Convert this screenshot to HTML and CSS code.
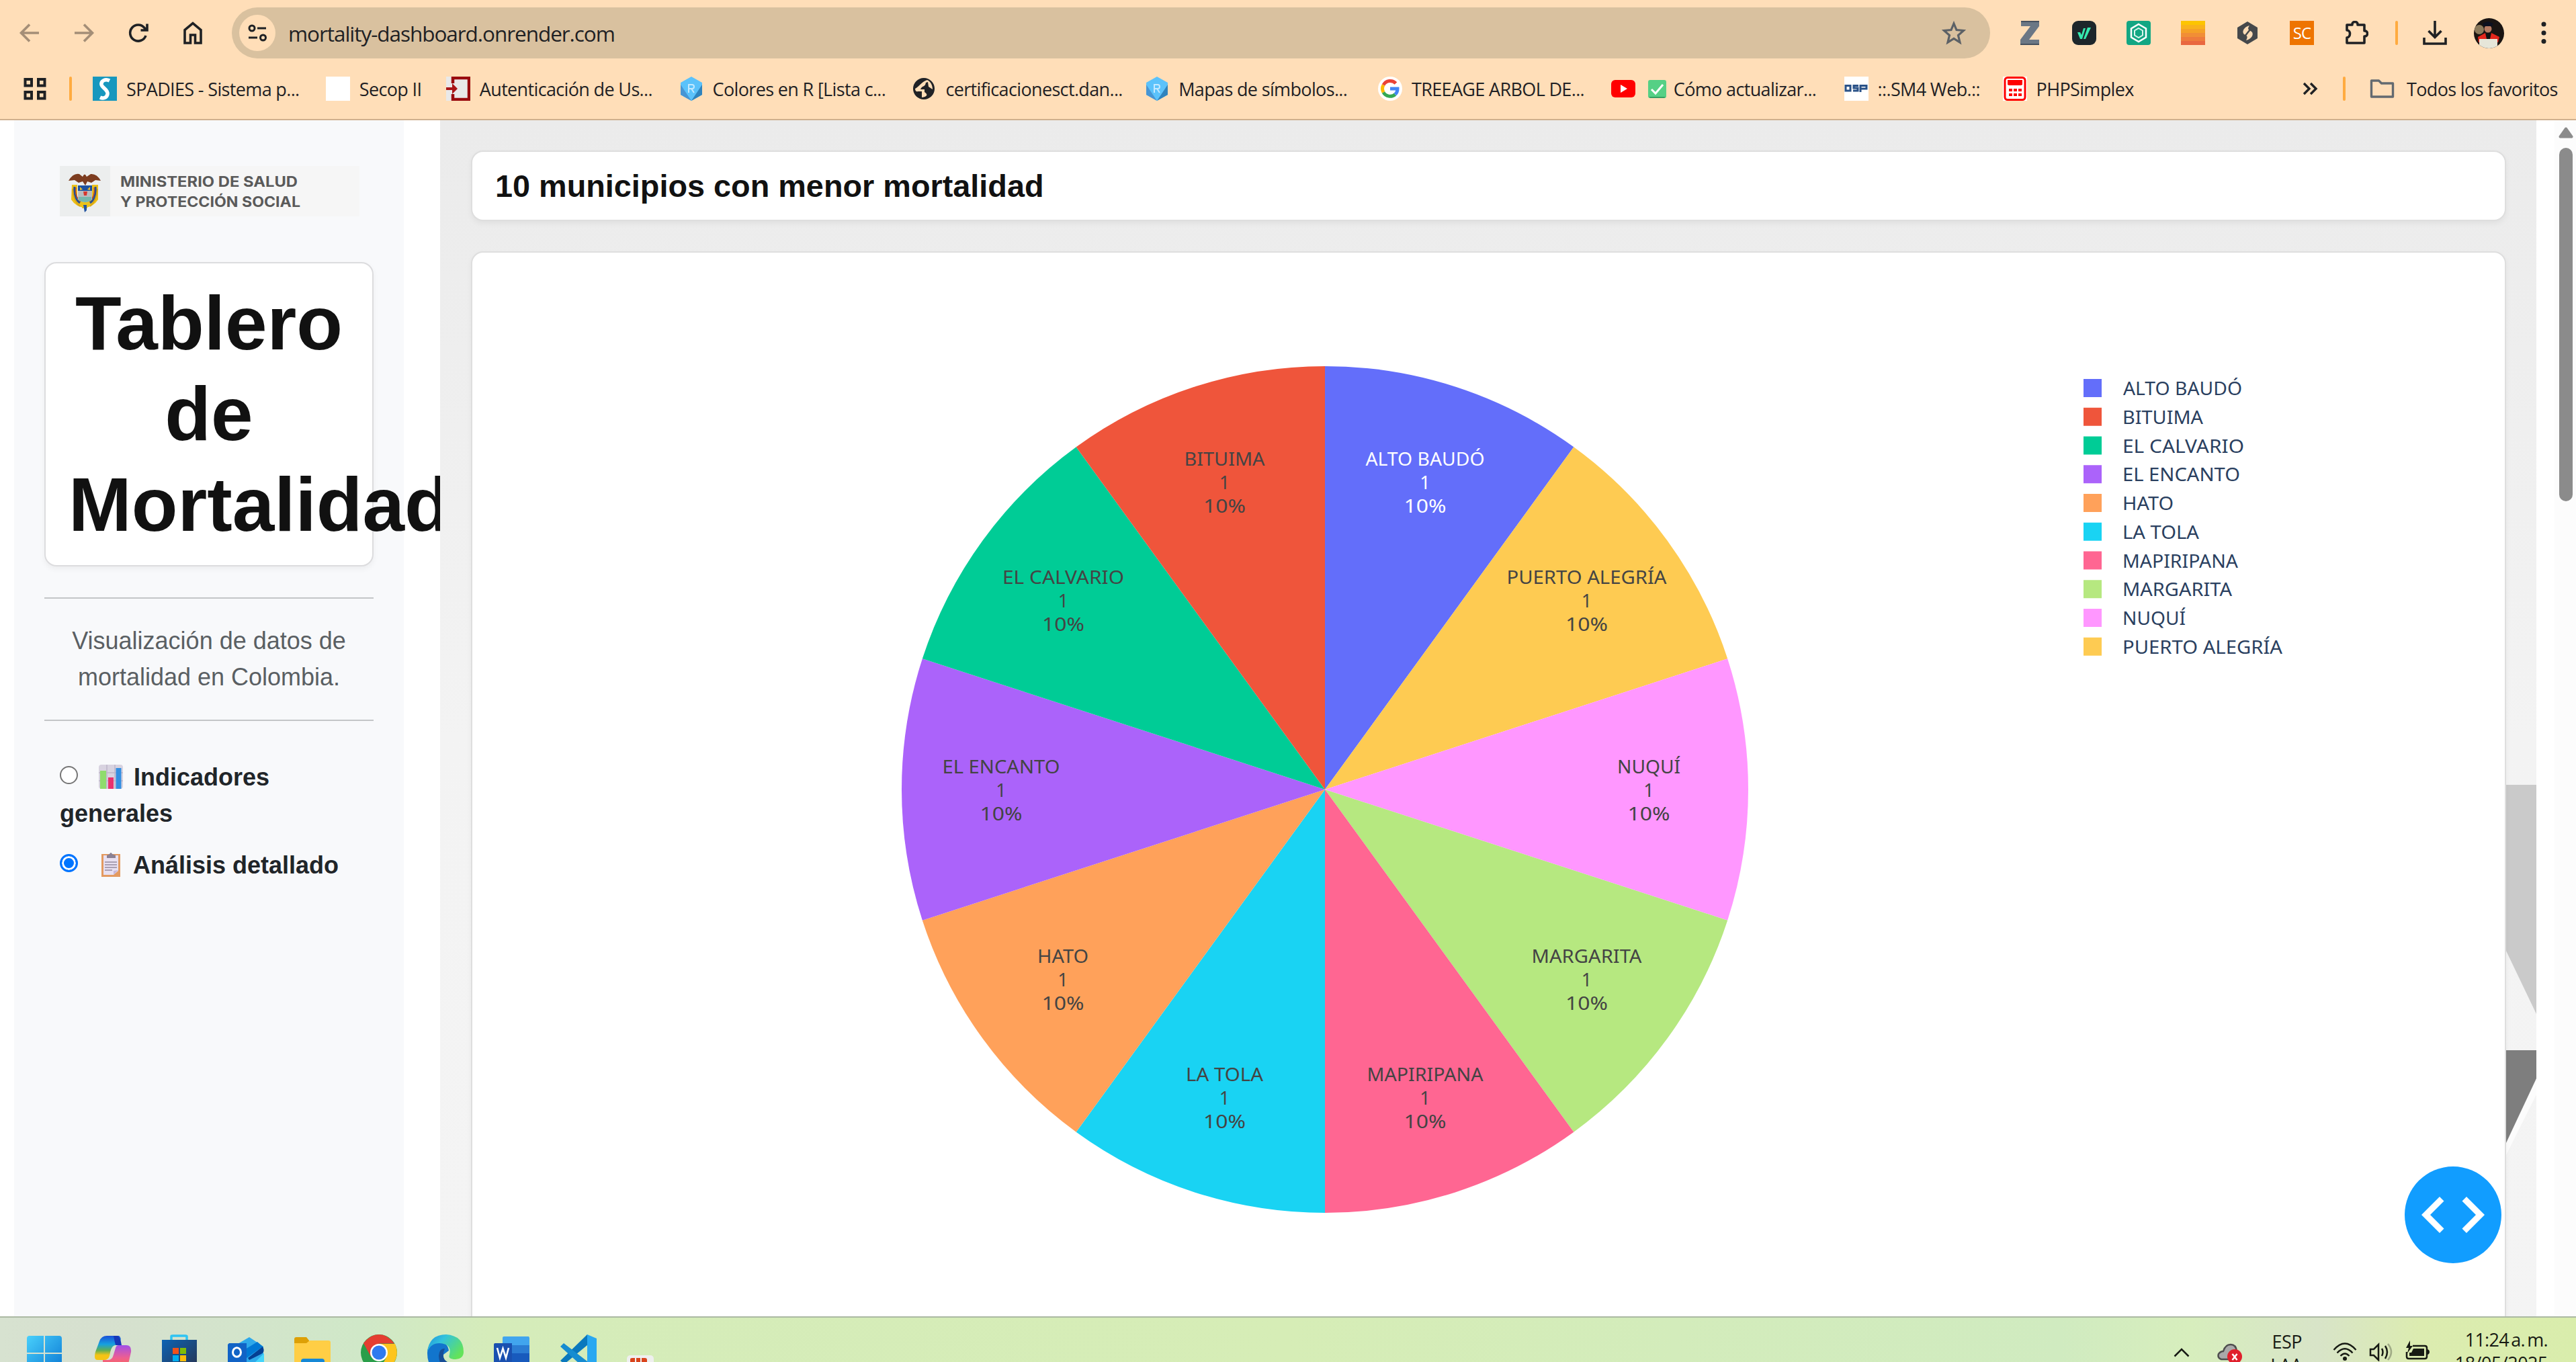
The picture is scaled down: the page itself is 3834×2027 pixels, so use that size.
FILE: index.html
```html
<!DOCTYPE html>
<html lang="es">
<head>
<meta charset="utf-8">
<title>Tablero de Mortalidad</title>
<link rel="stylesheet" href="styles.css">
</head>
<body>
<header class="browser">
  <div class="toolbar">
    <div class="nav">
      <svg class="ico faded" viewBox="0 0 36 36"><path d="M32 18H6M18 5.500L5.500 18L18 30.500" /></svg>
      <svg class="ico faded" viewBox="0 0 36 36"><path d="M4 18H30M18 5.500L30.500 18L18 30.500" /></svg>
      <svg class="ico" viewBox="0 0 36 36"><path d="M29 22A12 12 0 1 1 27 10.500L30 14M31 4.500V14H21.500" /></svg>
      <svg class="ico" viewBox="0 0 36 36"><path d="M6 33V13.500L18 3.500L30 13.500V33H21.500V21H14.500V33Z" /></svg>
    </div>
    <div class="omnibox">
      <span class="site-info"><svg viewBox="0 0 32 32"><circle cx="8" cy="9" r="4"/><path d="M16 9H29M3 23H16"/><circle cx="24.500" cy="23" r="4"/></svg></span>
      <span class="url">mortality-dashboard.onrender.com</span>
      <svg class="star" viewBox="0 0 36 36"><path d="M18 4L22 13.500L32.500 14.500L24.500 21.500L27 32L18 26.300L9 32L11.500 21.500L3.500 14.500L14 13.500Z"/></svg>
    </div>
    <div class="extensions">
      <svg viewBox="0 0 36 36"><path fill="#6b7785" d="M5 0H32V8L17 28H32V36H4V28L19 8H5Z"/><path fill="#46515f" d="M5 0H32V2H5ZM4 34H32V36H4Z"/></svg>
      <svg viewBox="0 0 36 36"><rect width="36" height="36" rx="9" fill="#1d262b"/><path d="M8 17H12L14 21L17 11H20L15 27H12ZM23 10H28L20 27H17Z" fill="#35e9b0"/></svg>
      <svg viewBox="0 0 36 36"><rect width="36" height="36" rx="4" fill="#12a683"/><path d="M18 5L29 11.500V24.500L18 31L7 24.500V11.500Z" fill="none" stroke="#fff" stroke-width="2.500"/><path d="M18 11L24 14.500V21.500L18 25L12 21.500V14.500Z" fill="none" stroke="#d9f5ec" stroke-width="2"/></svg>
      <svg viewBox="0 0 36 36"><path fill="#fdc500" d="M0 0H36V6H0Z"/><path fill="#f9b31b" d="M0 6H36V12H0Z"/><path fill="#f5a127" d="M0 12H36V18H0Z"/><path fill="#f18e36" d="M0 18H36V24H0Z"/><path fill="#ee7b3c" d="M0 24H36V30H0Z"/><path fill="#e9673f" d="M0 30H36V36H0Z"/></svg>
      <svg viewBox="0 0 36 36"><path fill="#45484b" d="M18 1L33 10V26L18 35L3 26V10Z"/><path fill="#fcdcb6" d="M21 7C13 9 9 16 13 20C16 22 20 22 16 29C25 27 28 19 24 16C20 13 17 13 21 7Z"/><path d="M22 13L14 23" stroke="#45484b" stroke-width="2.500"/></svg>
      <span class="sc">SC</span>
      <svg viewBox="0 0 36 36"><path d="M4 6H12C11 0 21 0 20 6H30V15C36 14 36 24 30 23V33H4V25C10 24 10 14 4 14Z" fill="none" stroke="#1f2124" stroke-width="3.600" stroke-linejoin="round"/></svg>
      <i class="divider"></i>
      <svg viewBox="0 0 36 36"><path d="M18 0V24M8.500 15L18 24.500L27.500 15M2 25V34H34V25" fill="none" stroke="#1f2124" stroke-width="3.600"/></svg>
      <svg class="avatar" viewBox="0 0 45 45"><clipPath id="face"><circle cx="22.500" cy="22.500" r="22.500"/></clipPath><g clip-path="url(#face)"><rect width="45" height="45" fill="#1a1412"/><circle cx="8" cy="17" r="7" fill="#8b7a5c"/><circle cx="21" cy="16" r="5.500" fill="#b77b62"/><path d="M13 8L21 5L29 8L27 12H15Z" fill="#0c1020"/><path d="M6 28L17 22H26L38 28L36 36H7Z" fill="#e3261c"/><path d="M17 22H26L24 31H19Z" fill="#111"/><rect x="8" y="31" width="27" height="15" fill="#e6e6d9"/></g></svg>
      <svg class="dots" viewBox="0 0 8 36"><circle cx="4" cy="5" r="3.500"/><circle cx="4" cy="18" r="3.500"/><circle cx="4" cy="30.500" r="3.500"/></svg>
    </div>
  </div>
  <nav class="bookmarks">
    <svg class="apps" viewBox="0 0 34 34"><path d="M2.500 3H12V12.500H2.500ZM22 3H31.500V12.500H22ZM2.500 22H12V31.500H2.500ZM22 22H31.500V31.500H22Z"/></svg>
    <i class="divider"></i>
    <div class="bookmark-list">
      <a class="bm"><svg viewBox="0 0 36 36"><path fill="#1797be" d="M0 0H36V36H0Z"/><path d="M25 6C19 3 12 6 13 12C14 17 23 19 22 26C21 32 15 33 11 31" fill="none" stroke="#fff" stroke-width="5.500"/></svg><span>SPADIES - Sistema p...</span></a>
      <a class="bm short"><svg viewBox="0 0 36 36"><path fill="#fff" d="M0 0H36V36H0Z"/></svg><span>Secop II</span></a>
      <a class="bm"><svg viewBox="0 0 36 36"><path fill="#e9e9e9" d="M0 0H36V36H0Z"/><path d="M10 10V2H34V34H10V26" fill="none" stroke="#990b0e" stroke-width="4.500"/><path fill="#a91518" d="M0 16H9V10L17 18L9 26V20H0Z"/></svg><span>Autenticación de Us...</span></a>
      <a class="bm"><svg viewBox="0 0 36 36"><path fill="#5bc2fb" d="M18 0L34 9V27L18 36L2 27V9Z"/><path fill="#2f83bd" d="M34 12V27L18 36Z"/><path fill="#4795d4" d="M2 12L18 36L2 27Z"/><path d="M14 24V12H19Q22 12 22 15T19 18H14M18 18L22 24" fill="none" stroke="#c4e9ff" stroke-width="2"/></svg><span>Colores en R [Lista c...</span></a>
      <a class="bm"><svg viewBox="0 0 36 36"><circle cx="18" cy="18" r="16" fill="#202226"/><path fill="#ffdeb8" d="M23 5C14 8 12 14 5 18C5 21 7 23 9 22H15V31C24 30 24 26 19 23V19H13C15 13 20 16 21 9L24 8L25 15L31 19C31 13 28 7 23 5Z"/></svg><span>certificacionesct.dan...</span></a>
      <a class="bm"><svg viewBox="0 0 36 36"><path fill="#5bc2fb" d="M18 0L34 9V27L18 36L2 27V9Z"/><path fill="#2f83bd" d="M34 12V27L18 36Z"/><path fill="#4795d4" d="M2 12L18 36L2 27Z"/><path d="M14 24V12H19Q22 12 22 15T19 18H14M18 18L22 24" fill="none" stroke="#c4e9ff" stroke-width="2"/></svg><span>Mapas de símbolos...</span></a>
      <a class="bm"><svg viewBox="0 0 36 36"><circle cx="18" cy="18" r="18" fill="#fff"/><g fill="none" stroke-width="5"><path stroke="#ea4335" d="M26.500 10A11.500 11.500 0 0 0 8 12.500"/><path stroke="#fbbc05" d="M8 12.500A11.500 11.500 0 0 0 8 23.500"/><path stroke="#34a853" d="M8 23.500A11.500 11.500 0 0 0 25.500 26.500"/><path stroke="#4285f4" d="M25.500 26.500A11.500 11.500 0 0 0 29 18H18"/></g></svg><span>TREEAGE ARBOL DE...</span></a>
      <a class="bm"><svg viewBox="0 0 36 36"><rect y="5" width="36" height="26" rx="6" fill="#f00"/><path fill="#fff" d="M14 12L24 18L14 24Z"/></svg><svg class="check" viewBox="0 0 27 27"><rect width="27" height="27" rx="3" fill="#55d085"/><path fill="#359f62" d="M1 25H26L24 27H3Z"/><path d="M5 14L11 20L22 7" fill="none" stroke="#fff" stroke-width="3"/></svg><span class="after-check">Cómo actualizar...</span></a>
      <a class="bm sm4"><svg viewBox="0 0 36 36"><path fill="#fff" d="M0 0H36V36H0Z"/><path d="M2 13.500H9V21H2ZM21 13.500H14V17H20V21H13M24 23V13.500H33V18H25" fill="none" stroke="#2a5288" stroke-width="3"/></svg><span>::.SM4 Web.::</span></a>
      <a class="bm php"><svg viewBox="0 0 36 36"><path fill="#fff" d="M0 0H36V36H0Z"/><rect x="3" y="1.500" width="30" height="33" rx="4" fill="#fff" stroke="#f00" stroke-width="3"/><path fill="#f00" d="M7 5H29V12L27 13H9L7 12ZM9 18H14V22H9ZM16 18H21V22H16ZM23 18H28V22H23ZM9 25H14V29H9ZM16 25H21V29H16ZM23 25H28V29H23Z"/></svg><span>PHPSimplex</span></a>
    </div>
    <svg class="more" viewBox="0 0 24 24"><path d="M3 4L11 12L3 20M13 4L21 12L13 20"/></svg>
    <i class="divider"></i>
    <a class="all"><svg viewBox="0 0 36 36"><path d="M2 30V6H13L17 10H34V30Z" fill="none" stroke="#636a70" stroke-width="3.400" stroke-linejoin="round"/></svg><span>Todos los favoritos</span></a>
  </nav>
</header>

<div class="page">
  <aside class="sidebar">
    <svg class="logo" viewBox="0 0 446 75">
      <path fill="#f6f6f6" d="M0 0H446V75H0Z"/><path fill="#eceeee" d="M0 0H75V75H0Z"/>
      <path d="M18 28L26 28V50H48V28L57 28L57 50Q50 61 37 62Q24 61 17 50Z" fill="#edc118"/>
      <path d="M22 31Q20 48 30 55M53 31Q55 48 45 55" fill="none" stroke="#274f93" stroke-width="3"/>
      <path d="M19 34Q20 52 30 60M56 34Q55 52 45 60" fill="none" stroke="#d9a614" stroke-width="2"/>
      <path d="M24 32Q22 46 31 53M51 32Q53 46 44 53" fill="none" stroke="#b3372b" stroke-width="1.200"/>
      <path fill="#b9bdc0" d="M27 29H48V50Q38 58 27 50Z"/><path fill="#1d52a0" d="M27 29H48V37H27Z"/><path fill="#76b8ac" d="M28 46H47V51Q38 57 28 51Z"/><path fill="#d6372e" d="M35 38H41L40 44H36Z"/>
      <path fill="#e5b82e" d="M30 31L34 35L30 36ZM45 31L41 35L45 36Z"/>
      <path fill="#7d3d20" d="M13 22Q20 10 29 12L34 16Q37 9 40 16L46 12Q55 11 61 22L53 21L47 25L41 23L38 29L34 23L28 25L22 21Z"/>
      <path fill="#eac31b" d="M33 54H41V63H33Z"/><path fill="#2254a0" d="M35 58H40V66L37 69Z"/>
      <text x="90" y="31" textLength="264" lengthAdjust="spacingAndGlyphs">MINISTERIO DE SALUD</text>
      <text x="90" y="61" textLength="268" lengthAdjust="spacingAndGlyphs">Y PROTECCIÓN SOCIAL</text>
    </svg>
    <h1 class="title">Tablero de Mortalidad</h1>
    <hr>
    <p class="lead">Visualización de datos de mortalidad en Colombia.</p>
    <hr>
    <div class="options">
      <label><i class="radio"></i><svg class="emoji" viewBox="0 0 36 36"><rect width="36" height="36" rx="4" fill="#d8d3e0"/><path d="M12 0V36M24 0V36M0 12H36M0 24H36" stroke="#bdb6c9" stroke-width="1.500"/><path fill="#8fdc6d" d="M2 9H11V36H2Z"/><path fill="#e9326f" d="M14 19H22V36H14Z"/><path fill="#348fe2" d="M25.500 5H33.500V36H25.500Z"/></svg>Indicadores generales</label>
      <label><i class="radio on"></i><svg class="emoji" viewBox="0 0 36 36"><path fill="#e39a60" d="M4 2H32V36H4Z"/><path fill="#e8e0f1" d="M7 4H29V27L22 33H7Z"/><path fill="#c7b7da" d="M29 26L22 33V27Z"/><path fill="#8b8193" d="M12 8V4L16 2Q18-2 20 2L25 4V8Z"/><path d="M9 14H27M9 18H27M9 22H27M9 26H20" stroke="#94899f" stroke-width="1.400"/></svg>Análisis detallado</label>
    </div>
  </aside>

  <main class="content">
    <svg class="backdrop" viewBox="0 0 46 560"><path fill="#cacaca" d="M0 9H46V350L0 254Z"/><path fill="#fcfcfc" d="M46 446V470L0 562V544Z"/><path fill="#7e7e7e" d="M0 404H46V446L0 544Z"/></svg>
    <h2 class="card heading">10 municipios con menor mortalidad</h2>
    <section class="card chart">
      <svg viewBox="703 376 3025 1581">
        <g transform="translate(1972 1175)">
          <path fill="#636efa" d="M0 0V-630A630 630 0 0 1 370.310 -509.680Z"/>
          <path fill="#fecb52" d="M0 0L370.310 -509.680A630 630 0 0 1 599.170 -194.680Z"/>
          <path fill="#ff97ff" d="M0 0L599.170 -194.680A630 630 0 0 1 599.170 194.680Z"/>
          <path fill="#b6e880" d="M0 0L599.170 194.680A630 630 0 0 1 370.310 509.680Z"/>
          <path fill="#ff6692" d="M0 0L370.310 509.680A630 630 0 0 1 0 630Z"/>
          <path fill="#19d3f3" d="M0 0V630A630 630 0 0 1 -370.310 509.680Z"/>
          <path fill="#ffa15a" d="M0 0L-370.310 509.680A630 630 0 0 1 -599.170 194.680Z"/>
          <path fill="#ab63fa" d="M0 0L-599.170 194.680A630 630 0 0 1 -599.170 -194.680Z"/>
          <path fill="#00cc96" d="M0 0L-599.170 -194.680A630 630 0 0 1 -370.310 -509.680Z"/>
          <path fill="#ef553b" d="M0 0L-370.310 -509.680A630 630 0 0 1 0 -630Z"/>
        </g>
        <g class="slice-label">
          <g class="light" transform="translate(2121 693)"><text textLength="177" lengthAdjust="spacingAndGlyphs">ALTO BAUDÓ</text><text y="35">1</text><text y="70" textLength="63" lengthAdjust="spacingAndGlyphs">10%</text></g>
          <g transform="translate(2361.500 869)"><text textLength="238" lengthAdjust="spacingAndGlyphs">PUERTO ALEGRÍA</text><text y="35">1</text><text y="70" textLength="63" lengthAdjust="spacingAndGlyphs">10%</text></g>
          <g transform="translate(2454 1151)"><text textLength="94" lengthAdjust="spacingAndGlyphs">NUQUÍ</text><text y="35">1</text><text y="70" textLength="63" lengthAdjust="spacingAndGlyphs">10%</text></g>
          <g transform="translate(2361.500 1433)"><text textLength="164" lengthAdjust="spacingAndGlyphs">MARGARITA</text><text y="35">1</text><text y="70" textLength="63" lengthAdjust="spacingAndGlyphs">10%</text></g>
          <g transform="translate(2121 1609)"><text textLength="173" lengthAdjust="spacingAndGlyphs">MAPIRIPANA</text><text y="35">1</text><text y="70" textLength="63" lengthAdjust="spacingAndGlyphs">10%</text></g>
          <g transform="translate(1822.500 1609)"><text textLength="115" lengthAdjust="spacingAndGlyphs">LA TOLA</text><text y="35">1</text><text y="70" textLength="63" lengthAdjust="spacingAndGlyphs">10%</text></g>
          <g transform="translate(1582 1433)"><text textLength="76" lengthAdjust="spacingAndGlyphs">HATO</text><text y="35">1</text><text y="70" textLength="63" lengthAdjust="spacingAndGlyphs">10%</text></g>
          <g transform="translate(1490 1151)"><text textLength="175" lengthAdjust="spacingAndGlyphs">EL ENCANTO</text><text y="35">1</text><text y="70" textLength="63" lengthAdjust="spacingAndGlyphs">10%</text></g>
          <g transform="translate(1582.500 869)"><text textLength="181" lengthAdjust="spacingAndGlyphs">EL CALVARIO</text><text y="35">1</text><text y="70" textLength="63" lengthAdjust="spacingAndGlyphs">10%</text></g>
          <g transform="translate(1822.500 693)"><text textLength="120" lengthAdjust="spacingAndGlyphs">BITUIMA</text><text y="35">1</text><text y="70" textLength="63" lengthAdjust="spacingAndGlyphs">10%</text></g>
        </g>
        <g class="legend" transform="translate(3101 564)">
          <rect fill="#636efa" width="27" height="27"/><text x="59" y="24" textLength="177" lengthAdjust="spacingAndGlyphs">ALTO BAUDÓ</text>
          <rect fill="#ef553b" y="42.750" width="27" height="27"/><text x="58" y="66.750" textLength="120" lengthAdjust="spacingAndGlyphs">BITUIMA</text>
          <rect fill="#00cc96" y="85.500" width="27" height="27"/><text x="58" y="109.500" textLength="181" lengthAdjust="spacingAndGlyphs">EL CALVARIO</text>
          <rect fill="#ab63fa" y="128.250" width="27" height="27"/><text x="58" y="152.250" textLength="175" lengthAdjust="spacingAndGlyphs">EL ENCANTO</text>
          <rect fill="#ffa15a" y="171" width="27" height="27"/><text x="58" y="195" textLength="76" lengthAdjust="spacingAndGlyphs">HATO</text>
          <rect fill="#19d3f3" y="213.750" width="27" height="27"/><text x="58" y="237.750" textLength="114" lengthAdjust="spacingAndGlyphs">LA TOLA</text>
          <rect fill="#ff6692" y="256.500" width="27" height="27"/><text x="58" y="280.500" textLength="172" lengthAdjust="spacingAndGlyphs">MAPIRIPANA</text>
          <rect fill="#b6e880" y="299.250" width="27" height="27"/><text x="58" y="323.250" textLength="163" lengthAdjust="spacingAndGlyphs">MARGARITA</text>
          <rect fill="#ff97ff" y="342" width="27" height="27"/><text x="58" y="366" textLength="94" lengthAdjust="spacingAndGlyphs">NUQUÍ</text>
          <rect fill="#fecb52" y="384.750" width="27" height="27"/><text x="58" y="408.750" textLength="238" lengthAdjust="spacingAndGlyphs">PUERTO ALEGRÍA</text>
        </g>
      </svg>
    </section>
    <svg class="debug" viewBox="0 0 144 144"><circle cx="72" cy="72" r="72" fill="#119dff"/><path fill="#fff" d="M25 72L52 45L58.500 51.500L38 72L58.500 92.500L52 99ZM119 72L92 45L85.500 51.500L106 72L85.500 92.500L92 99Z"/></svg>
  </main>

  <div class="scrollbar">
    <svg class="arrow" viewBox="0 0 22 17"><path d="M11 2.500L19.500 14.500H2.500Z"/></svg>
    <i class="thumb"></i>
    <svg class="arrow down" viewBox="0 0 22 17"><path d="M11 14.500L19.500 2.500H2.500Z"/></svg>
  </div>
</div>

<footer class="taskbar">
  <div class="apps-row">
    <svg viewBox="0 0 54 54"><defs><linearGradient id="win" x2="1" y2="1"><stop stop-color="#49d0fb"/><stop offset="1" stop-color="#0a78d4"/></linearGradient><linearGradient id="cop" x2="0" y2="1"><stop stop-color="#1b4fd8"/><stop offset=".35" stop-color="#15a0e0"/><stop offset=".6" stop-color="#5fae54"/><stop offset=".8" stop-color="#f5c414"/></linearGradient><linearGradient id="cop2" x2="0" y2="1"><stop stop-color="#a24fe8"/><stop offset=".5" stop-color="#ef5f8f"/><stop offset="1" stop-color="#fb6d3a"/></linearGradient><linearGradient id="store" x2="1" y2="1"><stop stop-color="#0d63b4"/><stop offset="1" stop-color="#28324e"/></linearGradient><linearGradient id="edge" x2="1" y2=".6"><stop stop-color="#1c8fdd"/><stop offset=".4" stop-color="#33c3dc"/><stop offset="1" stop-color="#63e35a"/></linearGradient></defs><path fill="url(#win)" d="M2 2H23V27H-2V6Q-2 2 2 2ZM25 2H46Q50 2 50 6V27H25ZM-2 29H23V54H-2ZM25 29H50V54H25Z"/></svg>
    <svg viewBox="0 0 54 54"><path fill="url(#cop)" d="M18 2H36Q40 4 38 12L28 17Q24 19 22 32Q20 38 14 38H4Q-2 38 1 26L7 10Q10 2 18 2Z"/><path fill="#1637b8" d="M28 2H34Q38 4 40 16H31Q29 8 28 2Z"/><path fill="url(#cop2)" d="M36 16H47Q55 16 54 26L50 44Q47 54 38 54H18Q12 50 12 38H20Q26 38 28 30L31 20Q32 16 36 16Z"/></svg>
    <svg viewBox="0 0 54 54"><path d="M15 11V3Q15 2 17 2H36Q38 2 38 3V11" fill="none" stroke="#2fc4f2" stroke-width="3.500"/><path fill="url(#store)" d="M1 8H53V54H1Z"/><path fill="#f1511b" d="M17 20H26V29H17Z"/><path fill="#80bc06" d="M28 20H37V29H28Z"/><path fill="#00adef" d="M17 31H26V40H17Z"/><path fill="#fbbc09" d="M28 31H37V40H28Z"/></svg>
    <svg viewBox="0 0 54 54"><path fill="#2ea9ea" d="M8 18L32 4L53 18V54H8Z"/><path fill="#0078d4" d="M26 22L44 11L52 18L28 35Z"/><path fill="#053f93" d="M30 35L52 18Q56 26 50 29L32 38Z"/><path fill="#45d5fa" d="M28 54L54 28V54Z"/><path fill="#1163c6" d="M2 13H28V54H0V15Z"/><ellipse cx="13.500" cy="26.500" rx="6" ry="6.800" fill="none" stroke="#fff" stroke-width="3"/></svg>
    <svg viewBox="0 0 54 54"><path fill="#dda006" d="M0 7Q0 4 3 4H18L22 9V14H0Z"/><path fill="#ffce45" d="M0 13H18L23 9H51Q54 9 54 12V54H0Z"/><path fill="#1588d6" d="M10 54V40Q10 36 14 36H41Q45 36 45 40V54Z"/></svg>
    <svg viewBox="0 0 54 54"><circle cx="27" cy="27" r="27" fill="#2a9e4a"/><path fill="#fdc51e" d="M27 14H51Q58 30 48 44T27 54L38 34Z"/><path fill="#e43e31" d="M4 13Q14 0 27 0T50 13.500H27L15 33Z"/><circle cx="27" cy="27" r="13" fill="#fff"/><circle cx="27" cy="27" r="10.500" fill="#2f7af0"/></svg>
    <svg viewBox="0 0 54 54"><path fill="#1275cd" d="M0 28Q0 12 14 10Q30 10 32 24L24 30Q22 40 32 48L30 54H10Q0 44 0 28Z"/><path fill="url(#edge)" d="M0 26Q3 0 28 0Q54 2 54 26Q54 36 42 37Q30 37 33 30Q37 14 18 13Q5 13 0 26Z"/><path fill="#174e96" d="M17 32Q18 20 26 21Q20 35 30 41H50Q42 54 30 54Q18 48 17 32Z"/></svg>
    <svg viewBox="0 0 54 54"><path fill="#41a5ee" d="M13 5Q13 3 15 3H52L53 5V16H13Z"/><path fill="#2b7cd3" d="M13 16H53V28H13Z"/><path fill="#185abd" d="M13 28H53V54H13Z"/><path fill="#1a50b0" d="M0 15Q0 13 2 13H27V43H0Z"/><path d="M5 20L9 35L13.500 21L18 35L22 20" fill="none" stroke="#fff" stroke-width="2.600"/></svg>
    <svg viewBox="0 0 54 54"><path fill="#0a78bd" d="M40 0V16L6 44L0 39L36 4Z"/><path fill="#168cd1" d="M5 13L40 40V54L0 18Z"/><path fill="#29a8f1" d="M40 0L54 6V54H40Z"/></svg>
    <svg viewBox="0 0 54 54"><rect y="31" width="40" height="30" rx="5" fill="#efefef"/><path fill="#d9441c" d="M5 37Q5 35 8 35H12V54H5ZM14 35H20V54H14ZM22 35H27Q30 35 30 38V54H22Z"/></svg>
  </div>
  <div class="tray">
    <svg class="up" viewBox="0 0 24 14"><path d="M1.500 12.500L12 2L22.500 12.500"/></svg>
    <svg class="cloud" viewBox="0 0 37 30"><path d="M6 24Q0 22 2 16Q5 12 9 12Q12 2 20 2Q28 2 29 12V24Z" fill="#a9a9a9" stroke="#4e4e4e" stroke-width="3"/><circle cx="26" cy="20" r="11" fill="#e0202c"/><path d="M22.500 16L29.500 25M29.500 16L22.500 25" stroke="#fff" stroke-width="2.500"/></svg>
    <div class="lang"><span>ESP</span><span>LAA</span></div>
    <svg class="net" viewBox="0 0 36 28"><path d="M1.500 11Q18-8 34.500 11M6.500 15.500Q18 3 29.500 15.500M11.500 20Q18 13 24.500 20"/><circle cx="18" cy="24" r="3"/></svg>
    <svg class="net" viewBox="0 0 36 28"><path d="M2 10H7L14 3V26L7 19H2ZM19 9Q22 14 19 20M24 5Q30 14 24 24"/><path d="M28 2Q38 14 28 26" opacity=".3"/></svg>
    <svg class="bat" viewBox="0 0 36 30"><path d="M11 8H29Q32 8 32 11V24Q32 27 29 27H5Q2 27 2 24V17" fill="none" stroke="#171a13" stroke-width="2.500"/><path fill="#171a13" d="M12 12H28V23H6V18H9ZM33 13Q36 14 36 17T33 21ZM7 0L1 11H5L3 19L11 8H7Z"/></svg>
    <div class="clock"><span class="time">11:24 a. m.</span><span>18/05/2025</span></div>
  </div>
</footer>
</body>
</html>
```

FILE: styles.css
```css
* { box-sizing: border-box; }
body { margin: 0; height: 2027px; overflow: hidden; display: grid; grid-template-rows: 179px 1780px 68px; background: #fff; font-family: "Open Sans", sans-serif; }
svg { display: block; flex: none; }

/* Browser chrome */
.browser { background: #ffdeb8; border-bottom: 2px solid #cfb08e; color: #1f2124; }
.toolbar { display: flex; align-items: center; height: 99px; padding: 0 44px 1px 26px; }
.nav { display: flex; gap: 45px; margin-right: 40px; }
.ico { width: 36px; height: 36px; fill: none; stroke: #1f2124; stroke-width: 3.6; }
.faded { stroke: #a48e77; }
.omnibox { display: flex; flex: none; align-items: center; width: 2617px; height: 76px; padding: 0 36px 0 11px; border-radius: 38px; background: #d9c19f; }
.site-info { display: grid; place-items: center; width: 54px; height: 54px; border-radius: 50%; background: #ffdeb8; }
.site-info svg { width: 32px; height: 32px; fill: none; stroke: #1f2124; stroke-width: 3; }
.url { flex: 1; margin-left: 19px; font-size: 31.500px; letter-spacing: -1.05px; }
.star { width: 36px; height: 36px; fill: none; stroke: #5c6166; stroke-width: 3.200; }
.extensions { display: flex; align-items: center; gap: 45px; margin-left: 41px; }
.extensions svg, .sc { width: 36px; height: 36px; }
.sc { flex: none; background: #ee7400; color: #fff; font-size: 24px; line-height: 36px; text-align: center; letter-spacing: -1px; }
.divider { flex: none; width: 4px; height: 36px; border-radius: 2px; background: #ffab40; }
.extensions .divider { margin: 0 -8px 0 -5px; }
.extensions .avatar { width: 45px; height: 45px; margin-right: 10px; margin-left: -5px; }
.extensions .dots { width: 8px; fill: #1f2124; }
.bookmarks { display: flex; align-items: center; height: 68px; padding: 0 0 2px 35px; font-size: 27px; letter-spacing: -.65px; white-space: nowrap; }
.apps { width: 34px; height: 34px; margin-right: 34px; fill: none; stroke: #1f2124; stroke-width: 4; }
.bookmark-list { display: flex; flex: none; width: 3319px; padding-left: 31px; }
.bm { display: flex; align-items: center; width: 346.800px; flex: none; }
.bm svg { width: 36px; height: 36px; margin-right: 14px; }
.bm .check { width: 27px; height: 27px; margin: 0 11px 0 5px; }
.short { width: 179px; }
.sm4 { width: 236px; }
.more { width: 24px; height: 24px; margin-right: 37px; fill: none; stroke: #1f2124; stroke-width: 3.400; }
.bookmarks .more + .divider { margin-right: 36px; }
.all { display: flex; align-items: center; gap: 18px; }
.all svg { width: 37px; height: 36px; }

/* Dashboard page */
.page { display: grid; grid-template-columns: 580px 54px 3120px 27px 32px; padding-left: 21px; overflow: hidden; font-family: "Liberation Sans", Arial, sans-serif; }
.content { grid-column: 3; }
.scrollbar { grid-column: 5; }
.sidebar { padding: 68px 45px; background: #f8f9fb; color: #212529; }
.logo { width: 446px; height: 75px; margin: 0 auto 68px 23px; font: 700 21px Inter, sans-serif; fill: #5a5a5a; }
.title { margin: 0 0 45px; padding: 22px 34px; height: 453px; border: 2px solid #dcdcde; border-radius: 18px; background: #fff; box-shadow: 0 4px 9px rgba(0,0,0,.05); color: #111; font-size: 112.500px; line-height: 135px; text-align: center; }
hr { margin: 0; height: 2px; border: 0; background: #c3c5c7; }
.title + hr { margin-top: 46px; }
.lead { margin: 36px 0; height: 108px; color: #5a5f63; font-size: 36px; line-height: 54px; text-align: center; }
.options { display: grid; gap: 23px; padding: 57px 22px 0 23px; font-size: 36px; font-weight: 700; line-height: 54px; }
.radio { display: inline-block; width: 27px; height: 27px; border: 2px solid #767676; border-radius: 50%; background: #fff; vertical-align: 2px; }
.on { border: 3px solid #0075ff; background: #0075ff; box-shadow: inset 0 0 0 3px #fff; }
.emoji { display: inline-block; width: 36px; height: 36px; margin: 0 16px 0 31px; vertical-align: -5px; }
.options label + label .emoji { margin-right: 15px; }

.content { position: relative; padding: 45px 45px 0 46px; background: linear-gradient(#ebebeb, #f3f3f3 50%, #f4f4f4); }
.card { margin: 0; border: 2px solid #dedede; border-radius: 18px; background: #fff; box-shadow: 0 4px 9px rgba(0,0,0,.05); position: relative; }
.heading { height: 105px; margin-bottom: 45px; padding: 22.500px 34px; color: #111; font-size: 46.800px; line-height: 56px; }
.chart { height: 1640px; }
.chart svg { width: 3025px; height: 1581px; }
.slice-label, .legend { font: 27px "Noto Sans", Verdana, sans-serif; }
.slice-label { text-anchor: middle; fill: #444; }
.light { fill: #fff; }
.legend { fill: #2a3f5f; }
.backdrop { position: absolute; right: 0; top: 980px; width: 46px; height: 560px; }
.debug { position: absolute; right: 52px; top: 1557px; width: 144px; height: 144px; }
.scrollbar { display: flex; flex-direction: column; align-items: center; padding: 10px 0 11px 2px; background: #fcfcfc; }
.arrow { width: 22px; height: 17px; fill: #8b8b8b; stroke: #8b8b8b; stroke-width: 4; stroke-linejoin: round; }
.thumb { width: 20px; height: 526px; margin-top: 14px; border-radius: 10px; background: #8b8b8b; }
.down { margin-top: auto; }

/* Windows taskbar */
.taskbar { display: flex; justify-content: space-between; align-items: flex-start; overflow: hidden; border-top: 2px solid #abb9a3; background: linear-gradient(90deg, #d7e2d0, #d6e0cf 4%, #d0e8c8 14%, #d5ecba 19%, #d6edb6 50%, #d0ebc0 80%, #d7eebd 85%, #d8e4c8 90%, #dcecb0 94%, #d9edac); }
.apps-row { display: flex; gap: 45px; padding: 25px 0 0 42px; }
.apps-row svg { width: 54px; height: 54px; overflow: visible; }
.tray { display: flex; align-items: flex-start; padding-right: 42px; color: #171a13; font-size: 27px; letter-spacing: -.5px; }
.tray span { display: block; height: 35px; line-height: 35px; white-space: nowrap; }
.tray path { fill: none; stroke: #171a13; stroke-width: 2.500; }
.up { width: 24px; height: 14px; margin: 45px 41px 0 0; }
.cloud { width: 37px; height: 30px; margin-top: 38px; }
.cloud path:first-child { fill: #a9a9a9; stroke: #4e4e4e; }
.cloud path:last-child { stroke: #fff; }
.lang { width: 89px; margin: 18px 46px 0 0; text-align: right; }
.net { width: 36px; height: 28px; margin: 37px 18px 0 0; fill: #171a13; }
.bat { width: 36px; height: 30px; margin-top: 34px; }
.bat path:last-child { fill: #171a13; stroke: none; }
.clock { width: 176px; margin-top: 15px; text-align: right; }
.time { word-spacing: -3px; letter-spacing: -.7px; }
```
